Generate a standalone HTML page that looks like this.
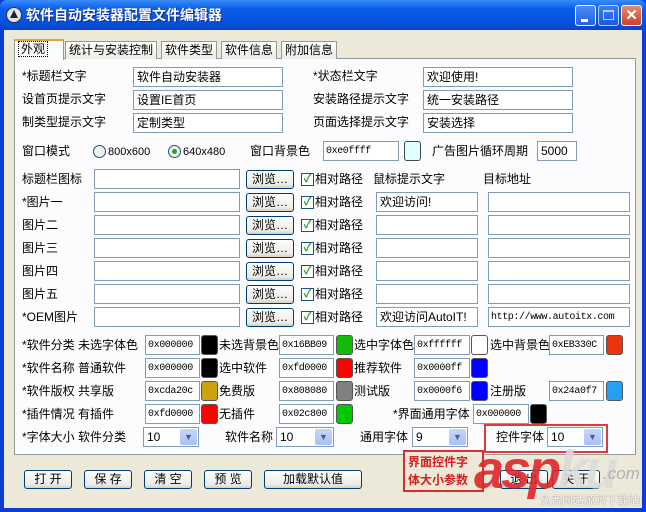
<!DOCTYPE html>
<html><head><meta charset="utf-8"><style>
*{margin:0;padding:0;box-sizing:border-box}
body{width:646px;height:512px;overflow:hidden;background:#0a3dd6;font-family:"Liberation Sans","Noto Sans CJK SC","WenQuanYi Zen Hei",sans-serif;font-size:12px;color:#000;position:relative}
.a{position:absolute;white-space:nowrap;line-height:12px}
#title{left:0;top:0;width:646px;height:30px;background:linear-gradient(#3a8cf8,#0a5fe8 30%,#0553e0 70%,#0845c8);border-radius:7px 7px 0 0}
#client{left:4px;top:30px;width:638px;height:478px;background:#ece9d8}
.ttl{left:26px;top:8px;color:#fff;font-weight:bold;font-size:14px;line-height:14px;text-shadow:1px 1px #0a2a90}
.wb{top:5px;width:21px;height:21px;border:1px solid #fff;border-radius:3px;background:linear-gradient(#4a8cf8,#2662e0)}
.panel{left:14px;top:58px;width:622px;height:397px;border:1px solid #919b9c;background:#fcfcfe}
.tab{top:41px;height:18px;border:1px solid #919b9c;border-bottom:none;background:linear-gradient(#fff,#ecebe6);padding:0 3px;line-height:16px;font-size:12px}
.in{height:20px;border:1px solid #7f9db9;background:#fff;padding:1px 3px;line-height:16px}
.a.mono{font-family:"Liberation Mono","DejaVu Sans Mono",monospace;font-size:10px;letter-spacing:-.4px;padding:4px 2px 0;line-height:12px}
.btn{height:19px;border:1px solid #003c74;border-radius:3px;background:linear-gradient(#fff,#ecebe5 80%,#d6d0c5);text-align:center;line-height:16px}
.sw{width:17px;height:20px;border:1px solid #555;border-radius:3px}
.cb{width:13px;height:13px;border:1px solid #1c5180;background:#fff;color:#21a121;font-size:11px;line-height:11px;text-align:center;font-weight:bold}
.dd{width:17px;height:16px;top:1px;right:1px;position:absolute;background:linear-gradient(#c6d7fb,#a8c0f4);border-radius:2px;color:#4d6185;font-size:9px;text-align:center;line-height:16px}
</style></head><body>
<div class="a" id="title"></div>
<div class="a" style="left:6px;top:7px;width:16px;height:16px;border-radius:50%;background:#dfe6f0;border:1px solid #333"></div>
<div class="a" style="left:10px;top:10px;width:0;height:0;border-left:4px solid transparent;border-right:4px solid transparent;border-bottom:8px solid #222"></div>
<div class="a ttl">软件自动安装器配置文件编辑器</div>
<div class="a wb" style="left:575px"><div class="a" style="left:5px;top:13px;width:7px;height:3px;background:#fff"></div></div>
<div class="a wb" style="left:598px;opacity:.7"><div class="a" style="left:4px;top:4px;width:11px;height:10px;border:1px solid #fff;border-top-width:2px"></div></div>
<div class="a wb" style="left:621px;width:21px;background:linear-gradient(#e88a6a,#c9432a);color:#fff;font-size:15px;text-align:center;line-height:19px;font-weight:bold">✕</div>
<div class="a" id="client"></div>
<div class="a panel"></div>
<div class="a tab" style="left:14px;top:39px;height:21px;background:#fcfcfe;border-top:2px solid #e6a23c;width:50px;line-height:16px"><span style="border:1px dotted #000;padding:0 2px">外观</span></div>
<div class="a tab" style="left:65px;line-height:16px">统计与安装控制</div>
<div class="a tab" style="left:161px;line-height:16px">软件类型</div>
<div class="a tab" style="left:221px;line-height:16px">软件信息</div>
<div class="a tab" style="left:281px;line-height:16px">附加信息</div>

<div class="a" style="left:22px;top:70px">*标题栏文字</div><div class="a in" style="left:133px;top:67px;width:150px">软件自动安装器</div>
<div class="a" style="left:313px;top:70px">*状态栏文字</div><div class="a in" style="left:423px;top:67px;width:150px">欢迎使用!</div>
<div class="a" style="left:22px;top:93px">设首页提示文字</div><div class="a in" style="left:133px;top:90px;width:150px">设置IE首页</div>
<div class="a" style="left:313px;top:93px">安装路径提示文字</div><div class="a in" style="left:423px;top:90px;width:150px">统一安装路径</div>
<div class="a" style="left:22px;top:116px">制类型提示文字</div><div class="a in" style="left:133px;top:113px;width:150px">定制类型</div>
<div class="a" style="left:313px;top:116px">页面选择提示文字</div><div class="a in" style="left:423px;top:113px;width:150px">安装选择</div>

<div class="a" style="left:22px;top:145px">窗口模式</div>
<div class="a" style="left:93px;top:145px;width:13px;height:13px;border:1px solid #1c5180;border-radius:50%;background:#f0f0ea"></div><div class="a" style="left:108px;top:146px;font-size:11px">800x600</div>
<div class="a" style="left:168px;top:145px;width:13px;height:13px;border:1px solid #1c5180;border-radius:50%;background:#f0f0ea"><div class="a" style="left:3px;top:3px;width:5px;height:5px;border-radius:50%;background:#21a121"></div></div><div class="a" style="left:183px;top:146px;font-size:11px">640x480</div>
<div class="a" style="left:250px;top:145px">窗口背景色</div><div class="a in mono" style="left:323px;top:141px;width:76px">0xe0ffff</div>
<div class="a sw" style="left:404px;top:141px;background:#e0ffff;border-color:#444"></div>
<div class="a" style="left:432px;top:145px">广告图片循环周期</div><div class="a in" style="left:537px;top:141px;width:40px">5000</div>

<div class="a" style="left:22px;top:173px">标题栏图标</div>
<div class="a" style="left:373px;top:173px">鼠标提示文字</div><div class="a" style="left:483px;top:173px">目标地址</div>
<div class="a" style="left:22px;top:196px">*图片一</div>
<div class="a" style="left:22px;top:219px">图片二</div>
<div class="a" style="left:22px;top:242px">图片三</div>
<div class="a" style="left:22px;top:265px">图片四</div>
<div class="a" style="left:22px;top:288px">图片五</div>
<div class="a" style="left:22px;top:311px">*OEM图片</div>

<div class="a in" style="left:94px;top:169px;width:146px"></div><div class="a btn" style="left:246px;top:170px;width:48px">浏览…</div><div class="a cb" style="left:301px;top:173px">✓</div><div class="a" style="left:315px;top:173px">相对路径</div>
<div class="a in" style="left:94px;top:192px;width:146px"></div><div class="a btn" style="left:246px;top:193px;width:48px">浏览…</div><div class="a cb" style="left:301px;top:196px">✓</div><div class="a" style="left:315px;top:196px">相对路径</div>
<div class="a in" style="left:94px;top:215px;width:146px"></div><div class="a btn" style="left:246px;top:216px;width:48px">浏览…</div><div class="a cb" style="left:301px;top:219px">✓</div><div class="a" style="left:315px;top:219px">相对路径</div>
<div class="a in" style="left:94px;top:238px;width:146px"></div><div class="a btn" style="left:246px;top:239px;width:48px">浏览…</div><div class="a cb" style="left:301px;top:242px">✓</div><div class="a" style="left:315px;top:242px">相对路径</div>
<div class="a in" style="left:94px;top:261px;width:146px"></div><div class="a btn" style="left:246px;top:262px;width:48px">浏览…</div><div class="a cb" style="left:301px;top:265px">✓</div><div class="a" style="left:315px;top:265px">相对路径</div>
<div class="a in" style="left:94px;top:284px;width:146px"></div><div class="a btn" style="left:246px;top:285px;width:48px">浏览…</div><div class="a cb" style="left:301px;top:288px">✓</div><div class="a" style="left:315px;top:288px">相对路径</div>
<div class="a in" style="left:94px;top:307px;width:146px"></div><div class="a btn" style="left:246px;top:308px;width:48px">浏览…</div><div class="a cb" style="left:301px;top:311px">✓</div><div class="a" style="left:315px;top:311px">相对路径</div>

<div class="a in" style="left:376px;top:192px;width:102px">欢迎访问!</div><div class="a in" style="left:488px;top:192px;width:142px"></div>
<div class="a in" style="left:376px;top:215px;width:102px"></div><div class="a in" style="left:488px;top:215px;width:142px"></div>
<div class="a in" style="left:376px;top:238px;width:102px"></div><div class="a in" style="left:488px;top:238px;width:142px"></div>
<div class="a in" style="left:376px;top:261px;width:102px"></div><div class="a in" style="left:488px;top:261px;width:142px"></div>
<div class="a in" style="left:376px;top:284px;width:102px"></div><div class="a in" style="left:488px;top:284px;width:142px"></div>
<div class="a in" style="left:376px;top:307px;width:102px">欢迎访问AutoIT!</div><div class="a in mono" style="left:488px;top:307px;width:142px">http://www.autoitx.com</div>

<div class="a" style="left:22px;top:339px">*软件分类 未选字体色</div>
<div class="a in mono" style="left:145px;top:335px;width:55px">0x000000</div><div class="a sw" style="left:201px;top:335px;background:#000"></div>
<div class="a" style="left:219px;top:339px">未选背景色</div><div class="a in mono" style="left:279px;top:335px;width:55px">0x16BB09</div><div class="a sw" style="left:336px;top:335px;background:#16bb09"></div>
<div class="a" style="left:354px;top:339px">选中字体色</div><div class="a in mono" style="left:414px;top:335px;width:56px">0xffffff</div><div class="a sw" style="left:471px;top:335px;background:#fff"></div>
<div class="a" style="left:490px;top:339px">选中背景色</div><div class="a in mono" style="left:549px;top:335px;width:55px">0xEB330C</div><div class="a sw" style="left:606px;top:335px;background:#eb330c"></div>

<div class="a" style="left:22px;top:362px">*软件名称 普通软件</div>
<div class="a in mono" style="left:145px;top:358px;width:55px">0x000000</div><div class="a sw" style="left:201px;top:358px;background:#000"></div>
<div class="a" style="left:219px;top:362px">选中软件</div><div class="a in mono" style="left:279px;top:358px;width:55px">0xfd0000</div><div class="a sw" style="left:336px;top:358px;background:#fd0000"></div>
<div class="a" style="left:354px;top:362px">推荐软件</div><div class="a in mono" style="left:414px;top:358px;width:56px">0x0000ff</div><div class="a sw" style="left:471px;top:358px;background:#0000ff"></div>

<div class="a" style="left:22px;top:385px">*软件版权 共享版</div>
<div class="a in mono" style="left:145px;top:381px;width:55px">0xcda20c</div><div class="a sw" style="left:201px;top:381px;background:#cda20c"></div>
<div class="a" style="left:219px;top:385px">免费版</div><div class="a in mono" style="left:279px;top:381px;width:55px">0x808080</div><div class="a sw" style="left:336px;top:381px;background:#808080"></div>
<div class="a" style="left:354px;top:385px">测试版</div><div class="a in mono" style="left:414px;top:381px;width:56px">0x0000f6</div><div class="a sw" style="left:471px;top:381px;background:#0000f6"></div>
<div class="a" style="left:490px;top:385px">注册版</div><div class="a in mono" style="left:549px;top:381px;width:55px">0x24a0f7</div><div class="a sw" style="left:606px;top:381px;background:#24a0f7"></div>

<div class="a" style="left:22px;top:408px">*插件情况 有插件</div>
<div class="a in mono" style="left:145px;top:404px;width:55px">0xfd0000</div><div class="a sw" style="left:201px;top:404px;background:#fd0000"></div>
<div class="a" style="left:219px;top:408px">无插件</div><div class="a in mono" style="left:279px;top:404px;width:55px">0x02c800</div><div class="a sw" style="left:336px;top:404px;background:#02c800"></div>
<div class="a" style="left:393px;top:408px">*界面通用字体</div><div class="a in mono" style="left:473px;top:404px;width:56px">0x000000</div><div class="a sw" style="left:530px;top:404px;background:#000"></div>

<div class="a" style="left:22px;top:431px">*字体大小 软件分类</div>
<div class="a in" style="left:143px;top:427px;width:56px">10<div class="dd">▼</div></div>
<div class="a" style="left:225px;top:431px">软件名称</div><div class="a in" style="left:276px;top:427px;width:58px">10<div class="dd">▼</div></div>
<div class="a" style="left:360px;top:431px">通用字体</div><div class="a in" style="left:412px;top:427px;width:56px">9<div class="dd">▼</div></div>
<div class="a" style="left:496px;top:431px">控件字体</div><div class="a in" style="left:547px;top:427px;width:56px">10<div class="dd">▼</div></div>
<div class="a" style="left:484px;top:424px;width:124px;height:29px;border:2px solid #e03a3a"></div>

<div class="a btn" style="left:24px;top:470px;width:48px;line-height:16px">打 开</div>
<div class="a btn" style="left:84px;top:470px;width:48px;line-height:16px">保 存</div>
<div class="a btn" style="left:144px;top:470px;width:48px;line-height:16px">清 空</div>
<div class="a btn" style="left:204px;top:470px;width:48px;line-height:16px">预 览</div>
<div class="a btn" style="left:264px;top:470px;width:98px;line-height:16px">加载默认值</div>
<div class="a btn" style="left:500px;top:470px;width:48px;line-height:16px">退 出</div>
<div class="a btn" style="left:552px;top:470px;width:48px;line-height:16px">关 于</div>

<div class="a" style="left:403px;top:450px;width:81px;height:42px;border:2px solid #d63030;background:#ece9d8;color:#d42020;font-weight:bold;font-size:12px;line-height:18px;padding:1px 0 0 3px;white-space:normal">界面控件字<br>体大小参数</div>
<div class="a" style="left:474px;top:440px;color:#e0262a;font-size:54px;font-weight:bold;font-style:italic;letter-spacing:-3px;line-height:60px;opacity:.9;font-family:'Liberation Sans',sans-serif">asp<span style="color:#dcdcd8">ku</span></div>
<div class="a" style="left:603px;top:465px;color:#b0b0b0;font-size:17px;line-height:17px;font-style:italic">.com</div>
<div class="a" style="left:540px;top:496px;color:#fff;font-size:11px;line-height:11px;text-shadow:0 0 1px #555">免费网站源码下载站!</div>
</body></html>
